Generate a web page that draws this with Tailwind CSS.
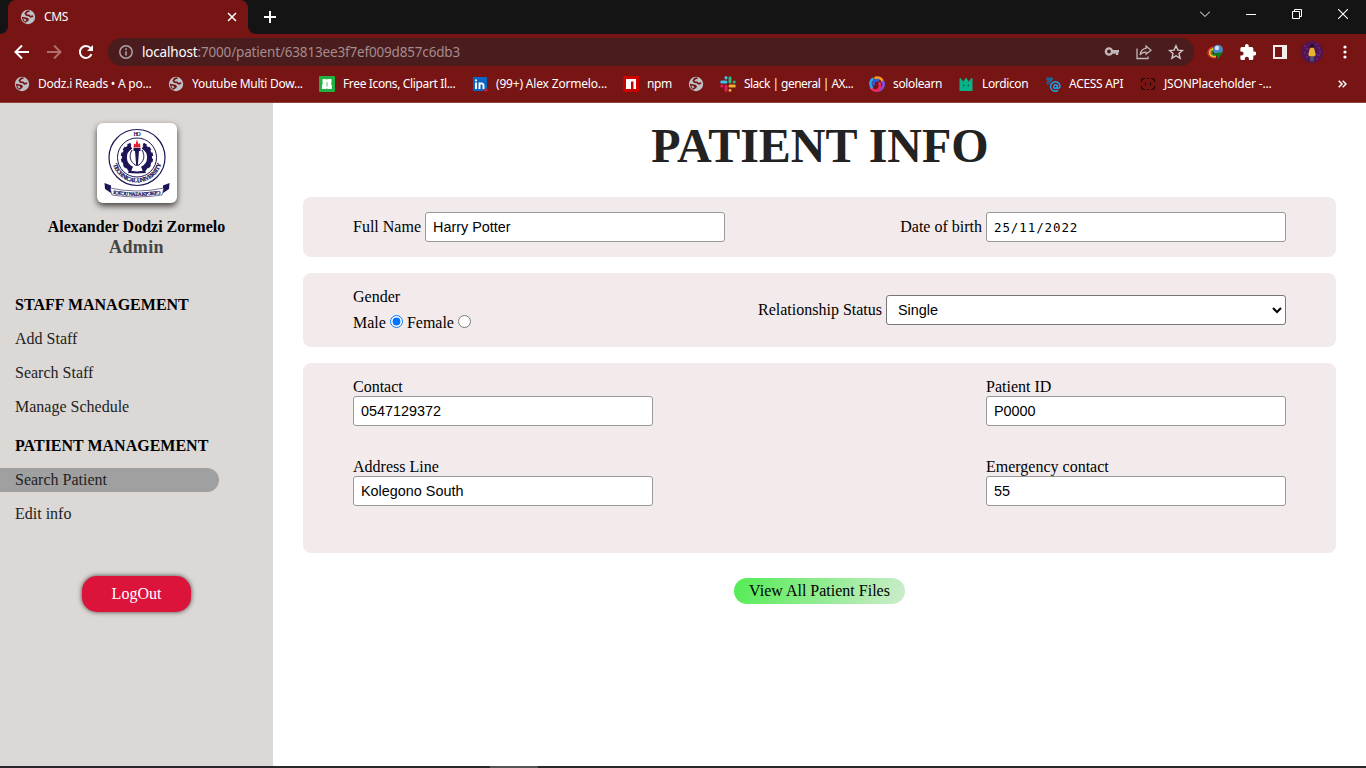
<!DOCTYPE html>
<html lang="en">
<head>
<meta charset="utf-8">
<title>CMS</title>
<script src="https://cdn.jsdelivr.net/npm/@tailwindcss/browser@4"></script>
</head>
<body class="w-[1366px] h-[768px] overflow-hidden bg-white flex flex-col text-black font-['Liberation_Serif','Times_New_Roman',serif]">
<svg width="0" height="0" class="absolute">
  <defs>
    <symbol id="globe" viewBox="0 0 16 16">
      <circle cx="8" cy="8" r="7.2" fill="#bdc1c6"/>
      <path d="M9.500 2 7 2.600 5.400 4.600 6.600 6.200 9 6.400 10.500 7.800 13.200 7.200" fill="none" stroke="#771414" stroke-width="1.700"/>
      <path d="M1.600 7.800 5 8.200 8 9 9 10.500 8 12.200 6.200 13 5.800 14 3 12Z M5.200 10 3 9.400 4.800 12.600 6.500 11.200Z" fill="#771414" fill-rule="evenodd"/>
    </symbol>
  </defs>
</svg>

<!-- Browser window -->
<header class="shrink-0 h-[103px] bg-[#771414] border-b border-[#914040] flex flex-col text-white font-['Noto_Sans','Open_Sans',sans-serif]">
  <!-- Tabs -->
  <div class="h-[34px] bg-[#141414] flex items-stretch">
    <div class="w-2 bg-[#771414]"><div class="h-full bg-[#141414] rounded-br-lg"></div></div>
    <div class="w-[240px] bg-[#771414] rounded-t-lg flex items-center pl-[12px] pr-[11px]">
      <svg class="size-4" viewBox="0 0 16 16"><use href="#globe"/></svg>
      <span class="ml-2 text-[12px] tracking-[-0.3px] grow">CMS</span>
      <svg class="size-[10px]" viewBox="0 0 10 10"><path d="M1 1 9 9M9 1 1 9" stroke="#fff" stroke-width="1.5"/></svg>
    </div>
    <div class="w-2 bg-[#771414]"><div class="h-full bg-[#141414] rounded-bl-lg"></div></div>
    <svg class="ml-2 mt-[11px] size-3" viewBox="0 0 12 12"><path d="M6 0V12M0 6H12" stroke="#fff" stroke-width="2"/></svg>
    <div class="grow"></div>
    <div class="flex items-start pt-[9px] pr-[18px]">
      <svg class="w-[10px] h-[10px] mr-[36px]" viewBox="0 0 10 10"><path d="M0 2.5 5 7.5 10 2.5" fill="none" stroke="#fff"/></svg>
      <svg class="w-[10px] h-[10px] mr-[36px]" viewBox="0 0 10 10"><path d="M0 5.5H10" stroke="#fff"/></svg>
      <svg class="w-[10px] h-[10px] mr-[36px]" viewBox="0 0 10 10"><path d="M.5 2.5H7.500V9.500H.5ZM2.500 2.500V.5H9.500V7.500H7.500" fill="none" stroke="#fff"/></svg>
      <svg class="w-[10px] h-[10px]" viewBox="0 0 10 10"><path d="M0 0 10 10M10 0 0 10" stroke="#fff" stroke-width="1.1"/></svg>
    </div>
  </div>
  <!-- Toolbar -->
  <div class="h-9 flex items-center pl-[14px] pr-[13px]">
    <svg class="size-4" viewBox="0 0 16 16"><path d="M15 8H2M8 1.500 1.500 8 8 14.500" fill="none" stroke="#fff" stroke-width="2"/></svg>
    <svg class="size-4 ml-4" viewBox="0 0 16 16"><path d="M1 8H14M8 1.500 14.500 8 8 14.500" fill="none" stroke="#b36d6d" stroke-width="2"/></svg>
    <svg class="size-4 ml-4" viewBox="0 0 16 16"><path d="M13.500 10.200A6 6 0 1 1 12.600 4.200" fill="none" stroke="#fff" stroke-width="2"/><path d="M15 1V7H9Z" fill="#fff"/></svg>
    <div class="ml-[14px] w-[1086px] h-7 rounded-full bg-[#4a1c1e] flex items-center pl-[11px] pr-[10px]">
      <svg class="size-[14px]" viewBox="0 0 14 14"><circle cx="7" cy="7" r="6.200" fill="none" stroke="#b0a2a3" stroke-width="1.500"/><path d="M7 6.200V10.500M7 3.300V4.900" stroke="#b0a2a3" stroke-width="1.600"/></svg>
      <span class="ml-[9px] text-[13.5px] tracking-[-0.17px] grow text-[#a58c8d] whitespace-nowrap"><span class="text-white">localhost</span>:7000/patient/63813ee3f7ef009d857c6db3</span>
      <svg class="w-4 h-4" viewBox="0 0 16 16"><circle cx="5" cy="7.500" r="3.100" fill="none" stroke="#c3b8b9" stroke-width="2.400"/><path d="M8 7.300H15M13 7V11M10.300 7V9.800" stroke="#c3b8b9" stroke-width="2.400"/></svg>
      <svg class="w-4 h-4 ml-4" viewBox="0 0 16 16"><path d="M1 4.500V14.500H12V12.500" fill="none" stroke="#c3b8b9" stroke-width="1.300"/><path d="M10 2 15 6.200 10 10.300V8.200C7.500 8 5.500 8.800 4 11 4.500 7.300 6.600 4.800 10 4.400Z" fill="none" stroke="#c3b8b9" stroke-width="1.200"/></svg>
      <svg class="w-4 h-4 ml-4" viewBox="0 0 16 16"><path d="M8 1.800 9.900 6.100 14.500 6.500 11 9.600 12.100 14.200 8 11.700 3.900 14.200 5 9.600 1.500 6.500 6.100 6.100Z" fill="none" stroke="#d2c9ca" stroke-width="1.400"/></svg>
    </div>
    <svg class="ml-[13px] w-[17px] h-4" viewBox="0 0 17 16">
      <path d="M6.500 2.800C1 4.500-.5 9 2.500 12 4 13.500 6.500 14 9 13.700" fill="none" stroke="#e23a2a" stroke-width="1.200"/>
      <path d="M6.500 4.500C2.500 6 1.500 9 4 11.300 5.200 12.300 7 12.700 9 12.500" fill="none" stroke="#f3d22b" stroke-width="1.600"/>
      <path d="M7 6.200C4.500 7 3.800 9 5.500 10.500 6.500 11.300 8 11.500 9 11.300" fill="none" stroke="#2f9e3a" stroke-width="1.500"/>
      <circle cx="11" cy="5.700" r="4.900" fill="#4f86c6"/><circle cx="10" cy="4" r="2.200" fill="#cfe3f5"/>
      <path d="M6.500 9.500 16.500 8 10.500 15.500 10 12Z" fill="#0f7a16"/>
    </svg>
    <svg class="ml-4 size-[16px]" viewBox="2 1 20 21"><path fill="#fff" d="M20.500 11H19V7a2 2 0 0 0-2-2h-4V3.500a2.500 2.500 0 0 0-5 0V5H4a2 2 0 0 0-2 2v3.800h1.500a2.700 2.700 0 0 1 0 5.400H2V20a2 2 0 0 0 2 2h3.800v-1.500a2.700 2.700 0 0 1 5.400 0V22H17a2 2 0 0 0 2-2v-4h1.500a2.500 2.500 0 0 0 0-5z"/></svg>
    <svg class="ml-[17px] w-[14px] h-[14px]" viewBox="0 0 14 14"><path d="M0 0H14V14H0ZM2 2V12H9V2Z" fill="#f3eded" fill-rule="evenodd"/></svg>
    <svg class="ml-[14px] size-[22px]" viewBox="0 0 22 22"><circle cx="11" cy="11" r="11" fill="#511555"/><path d="M3 5h2M15 3h2M17 7h2M3 12h2M16 14h3M5 16h2M5 8h2M15 18h2M18 11h2" stroke="#8d2c86"/><circle cx="11" cy="5" r="1.700" fill="#161018"/><path d="M8.800 7.500 11 6.500 13.200 7.500 14.800 14 13 15.500H9L7.200 14Z" fill="#e9b530"/><path d="M9 15.500H13L12.500 20.500H9.500Z" fill="#4a5570"/></svg>
    <svg class="ml-5 w-[4px] h-[14px]" viewBox="0 0 4 14"><circle cx="2" cy="2" r="1.600" fill="#fff"/><circle cx="2" cy="7" r="1.600" fill="#fff"/><circle cx="2" cy="12" r="1.600" fill="#fff"/></svg>
  </div>
  <!-- Bookmarks -->
  <div class="h-7 flex items-center pl-[14px] text-[12px] whitespace-nowrap">
    <div class="w-[154px] flex items-center gap-2"><svg class="size-4 shrink-0"><use href="#globe"/></svg><span class="tracking-[-0.22px]">Dodz.i Reads • A po...</span></div>
    <div class="w-[151px] flex items-center gap-2"><svg class="size-4 shrink-0"><use href="#globe"/></svg><span class="tracking-[-0.27px]">Youtube Multi Dow...</span></div>
    <div class="w-[153px] flex items-center gap-2"><svg class="size-4 shrink-0" viewBox="0 0 16 16"><rect width="16" height="16" rx="1" fill="#1fb141"/><path d="M3.500 3H7.200L7.700 4 8.500 3H12.500V6.500L12 8 12.800 9V13H8.500L8 12 7.500 13H3V8.500L4 8 3.500 7Z" fill="#fff"/><path d="M8 6V10.500" stroke="#1fb141" stroke-width=".8"/></svg><span class="tracking-[-0.36px]">Free Icons, Clipart Il...</span></div>
    <div class="w-[151px] flex items-center gap-2"><svg class="size-4 shrink-0" viewBox="0 0 16 16"><rect x="1" y="1" width="14" height="14" rx="1" fill="#0a66c2"/><path d="M4 6.500V13M7.500 13V6.500M7.500 9.500C7.500 6.800 11.500 6.500 11.500 9.500V13M4 3.500V5.200" fill="none" stroke="#fff" stroke-width="1.900"/><circle cx="14" cy="14" r="1.800" fill="#c81e2b"/></svg><span class="tracking-[-0.18px]">(99+) Alex Zormelo...</span></div>
    <div class="w-[65px] flex items-center gap-2"><svg class="size-4 shrink-0" viewBox="0 0 16 16"><rect width="16" height="16" fill="#cb0000"/><path d="M3 3H13V13H10.500V5.500H8V13H3Z" fill="#fff"/></svg><span class="tracking-[-0.4px]">npm</span></div>
    <div class="w-[32px]"><svg class="size-4"><use href="#globe"/></svg></div>
    <div class="w-[149px] flex items-center gap-2"><svg class="size-4 shrink-0" viewBox="0 0 16 16" fill="none" stroke-width="3" stroke-linecap="round"><path d="M1.700 6H6" stroke="#36c5f0"/><path d="M6 1.500V2" stroke="#36c5f0"/><path d="M10 1.700V6M14.300 6H14.200" stroke="#2eb67d"/><path d="M14.300 10H10M10 14.300V14.200" stroke="#ecb22e"/><path d="M6 14.300V10M1.700 10H1.800" stroke="#e01e5a"/></svg><span class="tracking-[-0.54px]">Slack | general | AX...</span></div>
    <div class="w-[89px] flex items-center gap-2"><svg class="size-4 shrink-0" viewBox="0 0 16 16" fill="none" stroke-width="2.700" stroke-linecap="round"><path d="M6.500 1.800C10 .8 13.500 3 14 6.500" stroke="#f99a1c"/><path d="M14.200 6C15.500 9.500 13.500 13.500 10 14.500" stroke="#7b4fe0"/><path d="M10.500 7.500C11.500 10.500 10.500 13.500 8 14.700 5.500 14.800 3.500 14 2 12" stroke="#f0265f"/><path d="M2.800 11.500C.8 8.500 1 5 3.500 3" stroke="#2ba4f4"/><path d="M4.500 8.500C4 5.500 6 3.800 9 4.200" stroke="#2b62e0"/></svg><span class="tracking-[-0.36px]">sololearn</span></div>
    <div class="w-[87px] flex items-center gap-2"><svg class="size-4 shrink-0" viewBox="0 0 16 16"><path d="M1.500 2.500 2.500 2 5.300 5.500 8 1.500 10.700 5.500 13.500 2 14.500 2.500V15H1.500Z" fill="#08b389"/><path d="M5 9.500H6.500M9.500 9.500H11" stroke="#0a5f4c" stroke-width="1.500"/></svg><span class="tracking-[-0.36px]">Lordicon</span></div>
    <div class="w-[95px] flex items-center gap-2"><svg class="size-4 shrink-0" viewBox="0 0 16 16" fill="none"><path d="M1 3H5M3 1V6M6 1 5 5M1 7 5 5M8 2 5 6M2 9 5 7" stroke="#1f6a9a" stroke-width="1.300"/><circle cx="10.500" cy="10.500" r="1.800" stroke="#1aa3e8" stroke-width="1.500"/><path d="M12.400 9V12C13 13 15 12 15 10.200A4.700 4.700 0 1 0 13 14.400" stroke="#1aa3e8" stroke-width="1.500"/></svg><span class="tracking-[-0.3px]">ACESS API</span></div>
    <div class="grow flex items-center gap-2"><svg class="size-4 shrink-0" viewBox="0 0 16 16" fill="none"><path d="M5 2.500H3L1.500 4V6M1.500 10V12L3 13.500H5M11 2.500H13L14.500 4V6M14.500 10V12L13 13.500H11M7 2.500H9M7 13.500H9M5.500 6.500V9.500M10.500 6.500V9.500" stroke="#1b0606" stroke-width="1.100"/></svg><span class="tracking-[-0.2px]">JSONPlaceholder -...</span></div>
    <svg class="w-[9px] h-[8px] mr-[19px]" viewBox="0 0 9 8"><path d="M.7.7 4 4 .7 7.300M4.700.7 8 4 4.700 7.300" fill="none" stroke="#fff" stroke-width="1.500"/></svg>
  </div>
</header>

<!-- Page -->
<div class="h-[663px] flex">
  <aside class="w-[273px] shrink-0 bg-[#dcd8d6] flex flex-col pt-5">
    <div class="self-center size-20 rounded-[6px] bg-white shadow-[0_3px_6px_rgba(0,0,0,0.7)]">
      <svg class="size-20" viewBox="0 0 80 80">
        <defs>
          <path id="arc" d="M15.200 34.500A24.800 24.800 0 0 0 64.800 34.500"/>
          <path id="motto" d="M14 70.500Q40 75 66 70.500"/>
        </defs>
        <g fill="none" stroke="#1d1557">
          <circle cx="40" cy="34.500" r="28" stroke-width="1.200"/>
          <circle cx="40" cy="34.500" r="19.500" stroke-width="1"/>
          <path d="M34 23.500A12.500 12.500 0 0 0 35 46M46 23.500A12.500 12.500 0 0 1 45 46" stroke-width="5"/>
          <path d="M33.800 21A14.500 14.500 0 0 0 34 47.500M46.200 21A14.500 14.500 0 0 1 46 47.500" stroke-width="3" stroke-dasharray="3.500 2.500"/>
          <path d="M35 27C31.500 33 33 39 39 42.500M45 27C48.500 33 47 39 41 42.500" stroke-width="1"/>
        </g>
        <path d="M36.500 25H43.500V28H42L40.800 43H39.200L38 28H36.500Z" fill="#1d1557"/>
        <path d="M36.500 24.500 37 20.500 38.500 21.500 40 16.500 41.500 21.500 43 20 43.500 24.500Z" fill="#dd2030"/>
        <path d="M32 47.500 40 48.500 48 47.500 49 50 40 50.500 31 50Z" fill="#1d1557"/>
        <text x="36.400" y="13.300" textLength="7.500" font-size="5.500" font-weight="bold" fill="#1d1557" font-family="Liberation Serif">HO</text>
        <text font-size="5.800" font-weight="bold" fill="#1d1557" stroke="#1d1557" stroke-width=".25" font-family="Liberation Serif"><textPath href="#arc" startOffset="7" textLength="64">TECHNICAL UNIVERSITY</textPath></text>
        <path d="M7.500 60 14 62.500 14 70 8 66ZM72.500 60 66 62.500 66 70 72 66Z" fill="#1d1557"/>
        <path d="M13 65Q40 71 67 65L65 72Q40 76 15 72Z" fill="#fff" stroke="#1d1557" stroke-width=".6"/>
        <text font-size="5" font-weight="bold" fill="#1d1557" stroke="#1d1557" stroke-width=".25" font-family="Liberation Serif"><textPath href="#motto" startOffset="2" textLength="48">SƆEƆU NAZA KPƆKPƆ</textPath></text>
      </svg>
    </div>
    <p class="mt-[15px] text-center text-[16px] leading-[18px] font-bold">Alexander Dodzi Zormelo</p>
    <p class="text-center text-[18px] tracking-[0.4px] leading-[23px] font-bold text-[#444]">Admin</p>
    <nav class="mt-[34px] text-[16px] text-[#222]">
      <h2 class="pl-[15px] h-6 mb-[10px] leading-6 font-bold text-black">STAFF MANAGEMENT</h2>
      <a class="block pl-[15px] h-6 mb-[10px] leading-6">Add Staff</a>
      <a class="block pl-[15px] h-6 mb-[10px] leading-6">Search Staff</a>
      <a class="block pl-[15px] h-6 mb-[15px] leading-6">Manage Schedule</a>
      <h2 class="pl-[15px] h-6 mb-[10px] leading-6 font-bold text-black">PATIENT MANAGEMENT</h2>
      <a class="block pl-[15px] h-6 mb-[10px] leading-6 w-[219px] rounded-r-full bg-[#a0a0a0]">Search Patient</a>
      <a class="block pl-[15px] h-6 leading-6">Edit info</a>
    </nav>
    <button class="self-center mt-[50px] w-[109px] h-9 rounded-[15px] bg-[#dc143c] text-white text-[16px] shadow-[0_0_5px_rgba(0,0,0,0.7)]">LogOut</button>
  </aside>

  <main class="grow px-[30px] flex flex-col text-[16px]">
    <h1 class="mt-[15px] h-[55px] pl-px text-center text-[48px] leading-[55px] font-bold text-[#222]">PATIENT INFO</h1>
    <section class="mt-6 h-[60px] px-[50px] rounded-[8px] bg-[#f3eaeb] flex items-center justify-between">
      <label class="flex items-center gap-1">Full Name
        <input class="w-[300px] h-[30px] px-[7px] border border-[#999] rounded-[3px] bg-white font-['Liberation_Sans',Arial,sans-serif] text-[14.400px]" value="Harry Potter"></label>
      <label class="flex items-center gap-1">Date of birth
        <input class="w-[300px] h-[30px] px-[7px] pt-px border border-[#999] rounded-[3px] bg-white font-['DejaVu_Sans_Mono',Consolas,monospace] text-[12.500px] tracking-[0.9px]" value="25/11/2022"></label>
    </section>
    <section class="mt-4 h-[74px] px-[50px] rounded-[8px] bg-[#f3eaeb] flex items-center justify-between">
      <div>
        <div class="leading-[22px] mb-1">Gender</div>
        <div class="flex items-center leading-[22px]">Male<input type="radio" name="gender" checked class="ml-1 mr-1 -mt-[3px] size-[13px]">Female<input type="radio" name="gender" class="ml-1 -mt-[3px] size-[13px]"></div>
      </div>
      <label class="flex items-center gap-1">Relationship Status
        <select class="w-[400px] h-[30px] pl-[7px] border border-[#767676] rounded-[3px] bg-white font-['Liberation_Sans',Arial,sans-serif] text-[14.400px]"><option>Single</option></select></label>
    </section>
    <section class="mt-4 h-[190px] px-[50px] pt-[15px] rounded-[8px] bg-[#f3eaeb] flex justify-between">
      <div class="flex flex-col gap-8">
        <label class="flex flex-col leading-[18px]">Contact
          <input class="w-[300px] h-[30px] px-[7px] border border-[#999] rounded-[3px] bg-white font-['Liberation_Sans',Arial,sans-serif] text-[14.400px]" value="0547129372"></label>
        <label class="flex flex-col leading-[18px]">Address Line
          <input class="w-[300px] h-[30px] px-[7px] border border-[#999] rounded-[3px] bg-white font-['Liberation_Sans',Arial,sans-serif] text-[14.400px]" value="Kolegono South"></label>
      </div>
      <div class="flex flex-col gap-8">
        <label class="flex flex-col leading-[18px]">Patient ID
          <input class="w-[300px] h-[30px] px-[7px] border border-[#999] rounded-[3px] bg-white font-['Liberation_Sans',Arial,sans-serif] text-[14.400px]" value="P0000"></label>
        <label class="flex flex-col leading-[18px]">Emergency contact
          <input class="w-[300px] h-[30px] px-[7px] border border-[#999] rounded-[3px] bg-white font-['Liberation_Sans',Arial,sans-serif] text-[14.400px]" value="55"></label>
      </div>
    </section>
    <a class="self-center mt-[25px] w-[171px] h-[26px] leading-[26px] text-center rounded-full bg-[linear-gradient(110deg,#53ec53,#cdeccd)]">View All Patient Files</a>
  </main>
</div>

<!-- Taskbar edge -->
<div class="h-[2px] shrink-0 bg-[#28282b] pl-[490px]"><div class="w-12 h-full bg-[#555]"></div></div>
</body>
</html>
